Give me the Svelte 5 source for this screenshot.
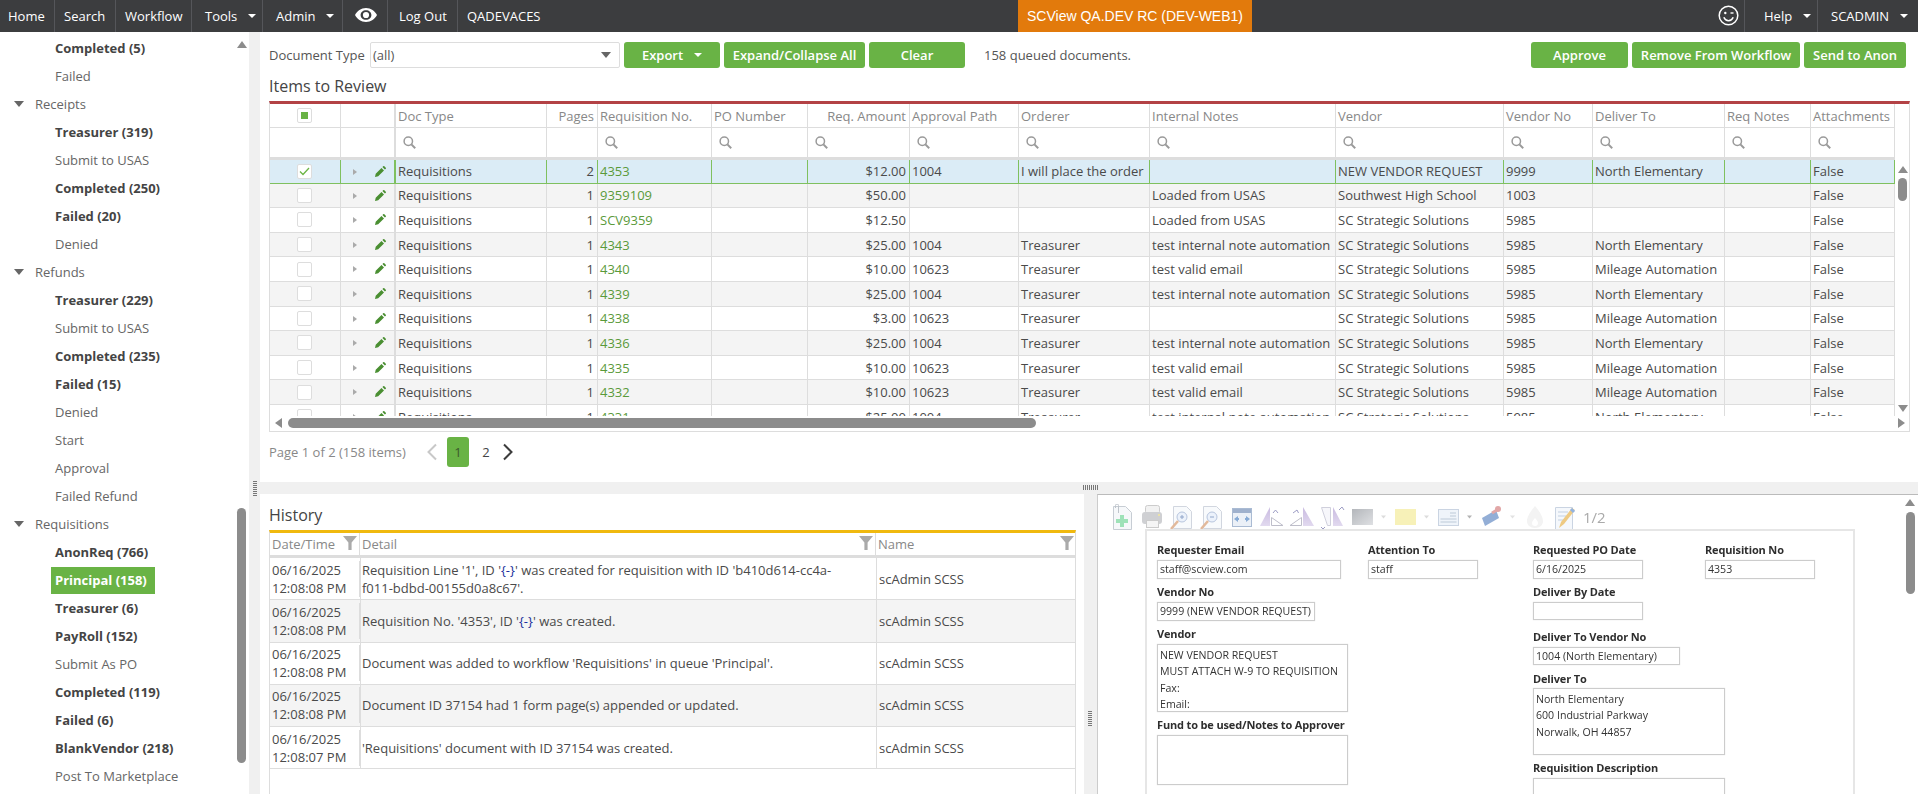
<script>
  const sidebar = [
    { t: 'Completed (5)', k: 'b' }, { t: 'Failed' },
    { t: 'Receipts', k: 'g' }, { t: 'Treasurer (319)', k: 'b' }, { t: 'Submit to USAS' },
    { t: 'Completed (250)', k: 'b' }, { t: 'Failed (20)', k: 'b' }, { t: 'Denied' },
    { t: 'Refunds', k: 'g' }, { t: 'Treasurer (229)', k: 'b' }, { t: 'Submit to USAS' },
    { t: 'Completed (235)', k: 'b' }, { t: 'Failed (15)', k: 'b' }, { t: 'Denied' },
    { t: 'Start' }, { t: 'Approval' }, { t: 'Failed Refund' },
    { t: 'Requisitions', k: 'g' }, { t: 'AnonReq (766)', k: 'b' }, { t: 'Principal (158)', k: 'a' },
    { t: 'Treasurer (6)', k: 'b' }, { t: 'PayRoll (152)', k: 'b' }, { t: 'Submit As PO' },
    { t: 'Completed (119)', k: 'b' }, { t: 'Failed (6)', k: 'b' }, { t: 'BlankVendor (218)', k: 'b' },
    { t: 'Post To Marketplace' }
  ];
  const cols = ['Doc Type', 'Pages', 'Requisition No.', 'PO Number', 'Req. Amount', 'Approval Path', 'Orderer', 'Internal Notes', 'Vendor', 'Vendor No', 'Deliver To', 'Req Notes', 'Attachments'];
  const T = 'test internal note automation', V = 'test valid email', S = 'SC Strategic Solutions', L = 'Loaded from USAS', N = 'North Elementary', M = 'Mileage Automation';
  const rows = [
    [2, '4353', '$12.00', '1004', 'I will place the order', '', 'NEW VENDOR REQUEST', '9999', N],
    [1, '9359109', '$50.00', '', '', L, 'Southwest High School', '1003', ''],
    [1, 'SCV9359', '$12.50', '', '', L, S, '5985', ''],
    [1, '4343', '$25.00', '1004', 'Treasurer', T, S, '5985', N],
    [1, '4340', '$10.00', '10623', 'Treasurer', V, S, '5985', M],
    [1, '4339', '$25.00', '1004', 'Treasurer', T, S, '5985', N],
    [1, '4338', '$3.00', '10623', 'Treasurer', '', S, '5985', M],
    [1, '4336', '$25.00', '1004', 'Treasurer', T, S, '5985', N],
    [1, '4335', '$10.00', '10623', 'Treasurer', V, S, '5985', M],
    [1, '4332', '$10.00', '10623', 'Treasurer', V, S, '5985', M],
    [1, '4331', '$25.00', '1004', 'Treasurer', T, S, '5985', N]
  ];
  const history = [
    ['12:08:08 PM', 'sc1'], ['12:08:08 PM', 'sc2'],
    ['12:08:08 PM', "Document was added to workflow 'Requisitions' in queue 'Principal'."],
    ['12:08:08 PM', 'Document ID 37154 had 1 form page(s) appended or updated.'],
    ['12:08:07 PM', "'Requisitions' document with ID 37154 was created."]
  ];
</script>

{#snippet filterIcon()}
  <svg class="funnel" viewBox="0 0 14 14" aria-hidden="true"><path d="M0 0h14L8.6 6.4V14H5.4V6.4z" /></svg>
{/snippet}

<div class="app">
  <header class="top">
    <nav class="nav">
      <span class="ni n-home">Home</span>
      <span class="ni n-search">Search</span>
      <span class="ni n-work">Workflow</span>
      <span class="ni n-tools">Tools<i class="caret"></i></span>
      <span class="ni n-admin">Admin<i class="caret"></i></span>
      <span class="ni n-eye">
        <svg width="22" height="14" viewBox="0 0 22 14" aria-hidden="true"><path fill="#fff" fill-rule="evenodd" d="M11 0C6 0 2.200 3 0 7c2.200 4 6 7 11 7s8.800-3 11-7c-2.200-4-6-7-11-7zm0 2.200C7.900 2.200 5.600 4.300 5.600 7s2.300 4.800 5.400 4.800 5.400-2.100 5.400-4.800S14.100 2.200 11 2.200z"/><circle cx="11" cy="7" r="3.100" fill="#fff"/></svg>
      </span>
      <span class="ni n-out">Log Out</span>
      <span class="ni n-qa">QADEVACES</span>
    </nav>
    <div class="env">SCView QA.DEV RC (DEV-WEB1)</div>
    <div class="nav-r">
      <span class="ni n-smile">
        <svg width="21" height="21" viewBox="0 0 21 21" aria-hidden="true"><circle cx="10.500" cy="10.500" r="9.300" fill="none" stroke="#fff" stroke-width="1.500"/><circle cx="7.300" cy="8" r="1.200" fill="#fff"/><path d="M12.500 8h3" stroke="#fff" stroke-width="1.400"/><path d="M5.800 12.300c1.200 2.600 3 3.500 4.700 3.500s3.600-.9 4.700-3.500" fill="none" stroke="#fff" stroke-width="1.500"/></svg>
      </span>
      <span class="ni n-help">Help<i class="caret"></i></span>
      <span class="ni n-user">SCADMIN<i class="caret"></i></span>
    </div>
  </header>

  <div class="body">
    <aside class="side">
      {#each sidebar as s}
        <div class="sr" class:g={s.k === 'g'} class:b={s.k === 'b'} class:a={s.k === 'a'}>
          {#if s.k === 'g'}<i class="tri"></i>{/if}
          <span>{s.t}</span>
        </div>
      {/each}
      <i class="s-up"></i>
      <i class="s-thumb"></i>
    </aside>

    <div class="vsplit"><i class="grip-v"></i></div>

    <main class="main">
      <section class="pane-top">
        <div class="tools">
          <span class="dt">Document Type</span>
          <div class="select"><span>(all)</span><i class="sel-caret"></i></div>
          <button class="btn b-export">Export<i class="caret"></i></button>
          <button class="btn b-exp">Expand/Collapse All</button>
          <button class="btn b-clear">Clear</button>
          <span class="count">158 queued documents.</span>
          <div class="right-btns">
            <button class="btn b-app">Approve</button>
            <button class="btn b-rem">Remove From Workflow</button>
            <button class="btn b-send">Send to Anon</button>
          </div>
        </div>
        <h2 class="title t-items">Items to Review</h2>

        <div class="grid">
          <div class="cols head">
            <div class="c c0"><span class="cb cb-h"><i></i></span></div>
            <div class="c c1"></div>
            {#each cols as c, i}
              <div class="c" class:r={i === 1 || i === 4}>{c}</div>
            {/each}
          </div>
          <div class="cols filt">
            <div class="c c0"></div>
            <div class="c c1"></div>
            {#each cols as c, i}
              <div class="c">
                {#if i !== 1}
                  <svg class="mag" viewBox="0 0 13 13" aria-hidden="true"><circle cx="5.300" cy="5.300" r="4.200" fill="none" stroke="#9a9a9a" stroke-width="1.500"/><path d="M8.400 8.400l3.800 3.900" stroke="#9a9a9a" stroke-width="2"/></svg>
                {/if}
              </div>
            {/each}
          </div>
          <div class="gbody">
            {#each rows as r, i}
              <div class="cols row" class:sel={i === 0} class:alt={i % 2 === 1}>
                <div class="c c0">
                  <span class="cb">
                    {#if i === 0}<svg width="11" height="9" viewBox="0 0 11 9" aria-hidden="true"><path d="M1 4.500l3 3 6-6.500" fill="none" stroke="#6cb545" stroke-width="1.300"/></svg>{/if}
                  </span>
                </div>
                <div class="c c1">
                  <i class="exp"></i>
                  <svg class="pen" viewBox="0 0 11 11" aria-hidden="true"><path fill="#4a8f32" d="M0 11l.7-3.200L6.500 2l2.500 2.500-5.800 5.800zM7.400 1.100L8.300.2c.3-.3.700-.3 1 0l1.500 1.500c.3.300.3.700 0 1l-.9.900z"/></svg>
                </div>
                <div class="c">Requisitions</div>
                <div class="c r">{r[0]}</div>
                <div class="c link">{r[1]}</div>
                <div class="c"></div>
                <div class="c r">{r[2]}</div>
                <div class="c">{r[3]}</div>
                <div class="c">{r[4]}</div>
                <div class="c">{r[5]}</div>
                <div class="c">{r[6]}</div>
                <div class="c">{r[7]}</div>
                <div class="c">{r[8]}</div>
                <div class="c"></div>
                <div class="c">False</div>
              </div>
            {/each}
            <i class="gv-up"></i><i class="gv-thumb"></i><i class="gv-down"></i>
          </div>
          <div class="hbar">
            <i class="gh-left"></i><i class="gh-thumb"></i><i class="gh-right"></i>
          </div>
        </div>

        <div class="pager">
          <span class="pg-text">Page 1 of 2 (158 items)</span>
          <svg class="chev" width="12" height="18" viewBox="0 0 12 18" aria-hidden="true"><path d="M10 1.500L2.500 9l7.500 7.500" fill="none" stroke="#c8c8c8" stroke-width="2"/></svg>
          <span class="pg on">1</span>
          <span class="pg">2</span>
          <svg class="chev" width="12" height="18" viewBox="0 0 12 18" aria-hidden="true"><path d="M2 1.500L9.500 9 2 16.500" fill="none" stroke="#3c3c3c" stroke-width="2"/></svg>
        </div>
      </section>

      <div class="hsplit"><i class="grip-h"></i></div>

      <section class="pane-bottom">
        <div class="hist">
          <h2 class="title t-hist">History</h2>
          <div class="htable">
            <div class="hcols hhead">
              <div class="hc">Date/Time{@render filterIcon()}</div>
              <div class="hc">Detail{@render filterIcon()}</div>
              <div class="hc">Name{@render filterIcon()}</div>
            </div>
            {#each history as h, i}
              <div class="hcols hrow" class:alt={i % 2 === 1}>
                <div class="hc">06/16/2025<br />{h[0]}</div>
                <div class="hc">
                  {#if h[1] === 'sc1'}Requisition Line '1', ID '<span class="blue">{'{-}'}</span>' was created for requisition with ID 'b410d614-cc4a-f011-bdbd-00155d0a8c67'.
                  {:else if h[1] === 'sc2'}Requisition No. '4353', ID '<span class="blue">{'{-}'}</span>' was created.
                  {:else}{h[1]}{/if}
                </div>
                <div class="hc">scAdmin SCSS</div>
              </div>
            {/each}
          </div>
        </div>

        <div class="vsplit2"><i class="grip-v"></i></div>

        <div class="viewer">
          <div class="vtools">
            <svg class="vicons" width="466" height="28" viewBox="0 0 466 28" aria-hidden="true">
              <defs>
                <linearGradient id="grayg" x1="0" x2="1" y1="0" y2="1"><stop offset="0" stop-color="#9a9ea4"/><stop offset="1" stop-color="#d4d6da"/></linearGradient>
                <linearGradient id="pur" x1="0" x2="0" y1="0" y2="1"><stop offset="0" stop-color="#b7a4d6"/><stop offset="1" stop-color="#d8cdea"/></linearGradient>
              </defs>
              <g opacity=".75">
                <path d="M.5 2.500h12l6 6v17H.5z" fill="#f3f6f8" stroke="#b5bcc6"/>
                <path d="M2.500 4V1.500a1.500 1.500 0 0 1 3 0V9" fill="none" stroke="#a8b0ba"/>
                <path d="M7 11h4v4h4v4h-4v4H7v-4H3v-4h4z" fill="#7ed8a0"/>
                <rect x="32.500" y="1.500" width="14" height="8" rx="2" fill="#eee" stroke="#bbb"/>
                <rect x="29" y="8" width="20" height="12" rx="3" fill="#bfc1c5"/>
                <rect x="33.500" y="16.500" width="12" height="7" fill="#f2f2f2" stroke="#bbb"/>
                <circle cx="46" cy="11" r="1" fill="#f1e07a"/>
                <path d="M60.500 2.500h13l5 5v17h-18z" fill="#f6f8fb" stroke="#c2c8d4"/>
                <circle cx="69" cy="13" r="5" fill="#e6eefa" stroke="#9fb2d2"/>
                <path d="M67 13h4M69 11v4" stroke="#6c88b8"/>
                <path d="M58 25l7-8" stroke="#d8a27a" stroke-width="2.500"/>
                <path d="M90.500 2.500h13l5 5v17h-18z" fill="#f6f8fb" stroke="#c2c8d4"/>
                <circle cx="99" cy="13" r="5" fill="#e6eefa" stroke="#9fb2d2"/>
                <path d="M97 13h4" stroke="#6c88b8"/>
                <path d="M88 25l7-8" stroke="#d8a27a" stroke-width="2.500"/>
                <rect x="119.500" y="4.500" width="19" height="18" fill="#e4ebf5" stroke="#8ea4c4"/>
                <rect x="120" y="5" width="18" height="4" fill="#7f97bd"/>
                <path d="M121 15l4-3v2h1v2h-1v2zM137 15l-4-3v2h-1v2h1v2z" fill="#5f8fc8"/>
                <path d="M157 3l-10 19h10z" fill="url(#pur)"/>
                <path d="M158.500 21.500h11.500l-11.500-8z" fill="#fff" stroke="#a8a8b8"/>
                <path d="M160 9l2.500-3 2.500 3" fill="none" stroke="#7c7cb0"/>
                <path d="M190 3l11 19h-11z" fill="url(#pur)"/>
                <path d="M188.500 21.500h-11.500l11.500-8z" fill="#fff" stroke="#a8a8b8"/>
                <path d="M180 9l4-3 1.500 3" fill="none" stroke="#7c7cb0"/>
                <path d="M208.500 3.500l9 0v18h-3z" fill="#f4f4fa" stroke="#c0c0d0"/>
                <path d="M220 3l10 19h-10z" fill="url(#pur)"/>
                <path d="M226 6l3-3 2 3M208 23l2 2 2-2" fill="none" stroke="#7c7cb0"/>
                <rect x="239" y="5" width="21" height="16" fill="url(#grayg)"/>
                <path d="M268 11.500h5L270.500 14.500z" fill="#d0d0d0"/>
                <rect x="282" y="5" width="21" height="16" fill="#f4eda0"/>
                <path d="M311 11.500h5L313.500 14.500z" fill="#d0d0d0"/>
                <rect x="325.500" y="5.500" width="20" height="16" fill="#eaf0f8" stroke="#b8c6d8"/>
                <path d="M337 9h6M337 12h6M327.500 15h16M327.500 18h16" stroke="#a8b8cc"/>
                <path d="M354 11.500h5L356.500 14.500z" fill="#9a9a9a"/>
                <path d="M369 14l14-8 3 8-14 8z" fill="#6f93c8"/>
                <circle cx="385" cy="5" r="3" fill="#d88a8a"/>
                <path d="M379 9l5-3" stroke="#d88a8a" stroke-width="3"/>
                <path d="M397 11.500h5L399.500 14.500z" fill="#d8d8d8"/>
                <path d="M422 2c-5 6-8 11-8 15 0 4 3 7 8 7s8-3 8-7c0-4-3-9-8-15zm0 12c-2 2-3 4-3 5 0 2 1 3 3 3s3-1 3-3c0-1-1-3-3-5z" fill="#efefef" fill-rule="evenodd"/>
                <path d="M442.500 3.500h17v22h-17z" fill="#f2f6fb" stroke="#b8c6d8"/>
                <path d="M445 8h10M445 12h8M445 16h6" stroke="#aec0d8"/>
                <path d="M446 24l2-6 11-14 3 2-11 14z" fill="#e8b85a"/>
                <path d="M458 5l3 3" stroke="#6c9ad8" stroke-width="3"/>
              </g>
            </svg>
            <span class="pgno">1/2</span>
          </div>
          <div class="page">
            <div class="pcol pa">
              <div class="lab">Requester Email</div>
              <div class="fld w-a">staff@scview.com</div>
              <div class="lab">Vendor No</div>
              <div class="fld w-b">9999 (NEW VENDOR REQUEST)</div>
              <div class="lab">Vendor</div>
              <div class="fld area w-c vend">NEW VENDOR REQUEST<br />MUST ATTACH W-9 TO REQUISITION<br />Fax:<br />Email:</div>
              <div class="lab">Fund to be used/Notes to Approver</div>
              <div class="fld area w-c fund"></div>
            </div>
            <div class="pcol pb">
              <div class="lab">Attention To</div>
              <div class="fld w-d">staff</div>
            </div>
            <div class="pcol pc">
              <div class="lab">Requested PO Date</div>
              <div class="fld w-d">6/16/2025</div>
              <div class="lab">Deliver By Date</div>
              <div class="fld w-d short"></div>
              <div class="lab lab-dv">Deliver To Vendor No</div>
              <div class="fld w-e short">1004 (North Elementary)</div>
              <div class="lab lab-dt">Deliver To</div>
              <div class="fld area w-f deliv">North Elementary<br />600 Industrial Parkway<br />Norwalk, OH 44857</div>
              <div class="lab">Requisition Description</div>
              <div class="fld area w-f desc"></div>
            </div>
            <div class="pcol pd">
              <div class="lab">Requisition No</div>
              <div class="fld w-d">4353</div>
            </div>
          </div>
          <i class="v-up"></i><i class="v-thumb"></i>
        </div>
      </section>
    </main>
  </div>
</div>

<style>
  :global(body) { margin: 0; background: #fff; }
  .app {
    width: 1918px; height: 794px; overflow: hidden; display: flex; flex-direction: column;
    font-family: "Open Sans", "Liberation Sans", sans-serif; font-size: 13px; color: #4a4a4a;
  }
  i { display: block; font-style: normal; }

  /* header */
  .top { height: 32px; flex: none; background: #3c3d3f; color: #fff; display: flex; align-items: stretch; }
  .nav, .nav-r { display: flex; }
  .nav { width: 1018px; }
  .nav-r { margin-left: auto; }
  .ni { display: flex; align-items: center; border-right: 1px solid #55565a; box-sizing: border-box; padding-left: 8px; white-space: nowrap; position: relative; }
  .n-home { width: 55px; }
  .n-search { width: 61px; padding-left: 9px; }
  .n-work { width: 76px; padding-left: 9px; }
  .n-tools { width: 71px; padding-left: 13px; }
  .n-admin { width: 80px; padding-left: 13px; }
  .n-eye { width: 45px; padding-left: 12px; padding-bottom: 3px; }
  .n-out { width: 70px; padding-left: 11px; }
  .n-qa { border-right: 0; padding-left: 9px; }
  .n-smile { width: 37px; padding-left: 10px; padding-bottom: 1px; }
  .n-help { width: 73px; padding-left: 19px; }
  .n-user { width: 100px; padding-left: 13px; border-right: 0; }
  .caret { width: 0; height: 0; border: 4px solid transparent; border-top-color: #fff; border-bottom: 0; margin-left: 11px; }
  .env { width: 234px; flex: none; background: #e27a0c; color: #fff; display: flex; align-items: center; justify-content: center; font-family: "Liberation Sans", sans-serif; font-size: 14px; white-space: nowrap; }

  .body { flex: 1; display: flex; min-height: 0; }

  /* sidebar */
  .side { width: 249px; flex: none; padding-top: 2px; position: relative; overflow: hidden; box-sizing: border-box; color: #666; }
  .sr { height: 28px; display: flex; align-items: center; padding-left: 55px; white-space: nowrap; }
  .sr.g { padding-left: 14px; }
  .sr.b { font-weight: 700; color: #444; }
  .sr.a { font-weight: 700; color: #fff; }
  .sr.a span { background: #69b345; margin-left: -4px; padding: 0 4px; height: 27px; display: flex; align-items: center; min-width: 96px; }
  .tri { width: 0; height: 0; border: 5px solid transparent; border-top: 6px solid #666; border-bottom: 0; margin-right: 11px; }
  .s-up { position: absolute; left: 237px; top: 9px; width: 0; height: 0; border: 5px solid transparent; border-bottom: 7px solid #8c8c8c; border-top: 0; }
  .s-thumb { position: absolute; left: 237px; top: 476px; width: 9px; height: 255px; border-radius: 5px; background: #8c8c8c; }

  .vsplit { width: 11px; flex: none; background: #f0f0f0; position: relative; }
  .grip-v { position: absolute; left: 4px; top: 449px; width: 4px; height: 15px; background: repeating-linear-gradient(to bottom, #777 0 1px, transparent 1px 2px); }

  .main { flex: 1; min-width: 0; display: flex; flex-direction: column; }
  .pane-top { height: 450px; flex: none; box-sizing: border-box; padding: 10px 8px 0 9px; }

  .tools { display: flex; align-items: center; height: 26px; margin-right: 4px; }
  .dt { width: 101px; flex: none; color: #555; white-space: nowrap; }
  .select { width: 250px; height: 26px; box-sizing: border-box; border: 1px solid #ddd; border-radius: 2px; padding-left: 2px; display: flex; align-items: center; justify-content: space-between; color: #555; }
  .sel-caret { width: 0; height: 0; border: 5px solid transparent; border-top: 6px solid #666; border-bottom: 0; margin-right: 8px; }
  .btn { height: 26px; border: 0; border-radius: 3px; background: #69b345; color: #fff; font: inherit; font-weight: 600; padding: 0; margin-left: 4px; display: flex; align-items: center; justify-content: center; white-space: nowrap; }
  .b-export { width: 96px; }
  .b-exp { width: 141px; }
  .b-clear { width: 96px; }
  .b-app { width: 97px; }
  .b-rem { width: 168px; }
  .b-send { width: 102px; }
  .count { margin-left: 19px; color: #555; }
  .right-btns { margin-left: auto; display: flex; }

  .title { margin: 0; font-weight: 400; font-size: 16px; color: #444; line-height: 22px; }
  .t-items { margin-top: 7px; height: 26px; }

  /* grid */
  .grid { border: 1px solid #ddd; border-top: 3px solid #b34245; border-bottom: 1px solid #ddd; height: 331px; box-sizing: border-box; position: relative; overflow: hidden; }
  .cols { display: grid; grid-template-columns: 71px 55px 151px 51px 114px 96px 102px 109px 131px 186px 168px 89px 132px 86px 84px; width: 1625px; }
  .c { box-sizing: border-box; padding: 0 3px 0 2px; border-right: 1px solid #ddd; white-space: nowrap; overflow: hidden; display: flex; align-items: center; }
  .c.r { justify-content: flex-end; }
  .c1 { border-right-width: 2px; position: relative; }
  .c0 { justify-content: center; }
  .head { height: 24px; border-bottom: 1px solid #ddd; box-sizing: border-box; color: #888; }
  .filt { height: 32px; border-bottom: 3px solid #ddd; box-sizing: border-box; }
  .mag { width: 13px; height: 13px; margin-left: 5px; }
  .gbody { height: 256px; overflow: hidden; position: relative; }
  .row { height: 24.6px; border-bottom: 1px solid #ddd; box-sizing: border-box; }
  .row.alt { background: #f4f4f4; }
  .row.sel { height: 23.6px; background: #dbecf6; border-bottom-color: #7fc05f; }
  .row.sel .c { border-right-color: #7fc05f; }
  .link { color: #5a9a3a; }
  .cb { width: 15px; height: 15px; box-sizing: border-box; border: 1px solid #ddd; border-radius: 2px; background: #fff; display: flex; align-items: center; justify-content: center; }
  .cb-h i { width: 7px; height: 7px; background: #69b345; }
  .exp { position: absolute; left: 12px; top: 9px; width: 0; height: 0; border: 3px solid transparent; border-left: 4px solid #aaa; border-right: 0; }
  .pen { position: absolute; left: 34px; top: 6px; width: 11px; height: 11px; }
  .gv-up, .gv-thumb, .gv-down { position: absolute; left: 1628px; z-index: 2; }
  .gv-up { top: 6px; width: 0; height: 0; border: 5px solid transparent; border-bottom: 7px solid #8c8c8c; border-top: 0; }
  .gv-thumb { top: 18px; width: 9px; height: 23px; border-radius: 5px; background: #8c8c8c; }
  .gv-down { top: 245px; width: 0; height: 0; border: 5px solid transparent; border-top: 7px solid #8c8c8c; border-bottom: 0; }
  .hbar { height: 16px; position: relative; background: #fff; }
  .gh-left { position: absolute; left: 5px; top: 2px; width: 0; height: 0; border: 5px solid transparent; border-right: 7px solid #8c8c8c; border-left: 0; }
  .gh-thumb { position: absolute; left: 18px; top: 2px; width: 748px; height: 10px; border-radius: 5px; background: #8c8c8c; }
  .gh-right { position: absolute; left: 1628px; top: 2px; width: 0; height: 0; border: 5px solid transparent; border-left: 7px solid #8c8c8c; border-right: 0; }

  .pager { display: flex; align-items: center; height: 30px; margin-top: 5px; }
  .pg-text { color: #888; width: 157px; flex: none; white-space: nowrap; }
  .pg { width: 22px; height: 30px; display: flex; align-items: center; justify-content: center; border-radius: 3px; margin-left: 6px; color: #444; }
  .pg.on { background: #69b345; margin-left: 9px; color: #3c5a2c; }
  .pg + .chev { margin-left: 5px; }

  .hsplit { height: 12px; flex: none; background: #f0f0f0; position: relative; }
  .grip-h { position: absolute; left: 823px; top: 3px; width: 15px; height: 5px; background: repeating-linear-gradient(to right, #777 0 1px, transparent 1px 2px); }

  .pane-bottom { flex: 1; min-height: 0; display: flex; }
  .hist { width: 824px; flex: none; box-sizing: border-box; padding: 10px 8px 0 9px; }
  .t-hist { height: 26px; }
  .htable { border-top: 3px solid #f0b90f; border-left: 1px solid #ddd; border-right: 1px solid #ddd; height: 300px; box-sizing: border-box; }
  .hcols { display: grid; grid-template-columns: 90px 516px 200px; }
  .hc { box-sizing: border-box; padding: 0 3px 0 2px; border-right: 1px solid #ddd; display: flex; flex-wrap: wrap; align-content: center; align-items: center; line-height: 18px; position: relative; }
  .hc:last-child { border-right: 0; }
  .hc span.blue { color: #1a2f9c; }
  .hrow .hc:nth-child(2) { display: block; align-self: center; border-right: 0; padding-right: 30px; }
  .hrow .hc:nth-child(3) { border-left: 1px solid #ddd; }
  .hrow .hc:first-child { display: block; align-self: center; }
  .hrow .hc:first-child, .hrow .hc:nth-child(2) { height: auto; }
  .hhead { height: 25px; border-bottom: 3px solid #ddd; box-sizing: border-box; color: #888; }
  .hrow { height: 42.25px; border-bottom: 1px solid #ddd; box-sizing: border-box; color: #4a4a4a; position: relative; }
  .hrow::before { content: ""; position: absolute; left: 90px; top: 0; bottom: 0; width: 1px; background: #ddd; }
  .hrow.alt { background: #f4f4f4; }
  .funnel { position: absolute; right: 2px; top: 3px; width: 14px; height: 14px; fill: #aaa; }

  .vsplit2 { width: 13px; flex: none; background: #f0f0f0; position: relative; }
  .vsplit2 .grip-v { left: 4px; top: 217px; height: 15px; }

  /* viewer */
  .viewer { flex: 1; min-width: 0; box-sizing: border-box; border-left: 1px solid #ccc; border-top: 1px solid #bbb; position: relative; overflow: hidden; }
  .vtools { height: 34px; display: flex; align-items: flex-start; padding: 9px 0 0 15px; box-sizing: border-box; filter: blur(.3px); }
  .vicons { flex: none; }
  .pgno { margin: 3px 0 0 4px; font-size: 15px; line-height: 20px; color: #aaa; }
  .page { margin-left: 47px; width: 710px; height: 300px; box-sizing: border-box; border: 2px solid #e6e6e6; border-bottom: 0; display: flex; padding: 11px 0 0 10px; font-size: 10.6px; color: #333; filter: blur(.25px); }
  .pcol { flex: none; display: flex; flex-direction: column; align-items: flex-start; }
  .pa { width: 211px; }
  .pb { width: 165px; }
  .pc { width: 172px; }
  .lab { height: 16px; line-height: 16px; margin: 5px 0 2px; font-size: 11px; font-weight: 700; color: #2e2e2e; white-space: nowrap; letter-spacing: -.15px; }
  .lab:first-child { margin-top: 0; }
  .fld { height: 19px; box-sizing: border-box; border: 1px solid #ccc; box-shadow: 0 0 1px #ddd; padding: 0 2px; line-height: 17px; white-space: nowrap; }
  .short { height: 18px; }
  .w-a { width: 184px; }
  .w-b { width: 158px; }
  .w-c { width: 191px; }
  .w-d { width: 110px; }
  .w-e { width: 147px; }
  .w-f { width: 192px; }
  .area { padding-top: 2px; line-height: 16.300px; }
  .vend { height: 68px; }
  .fund { height: 50px; }
  .lab-dv { margin-top: 9px; }
  .lab-dt { margin: 6px 0 1px; }
  .deliv { height: 67px; }
  .desc { height: 50px; }
  .v-up { position: absolute; right: 3px; top: 4px; width: 0; height: 0; border: 5px solid transparent; border-bottom: 7px solid #8c8c8c; border-top: 0; }
  .v-thumb { position: absolute; right: 3px; top: 17px; width: 9px; height: 82px; border-radius: 5px; background: #8c8c8c; }
</style>
